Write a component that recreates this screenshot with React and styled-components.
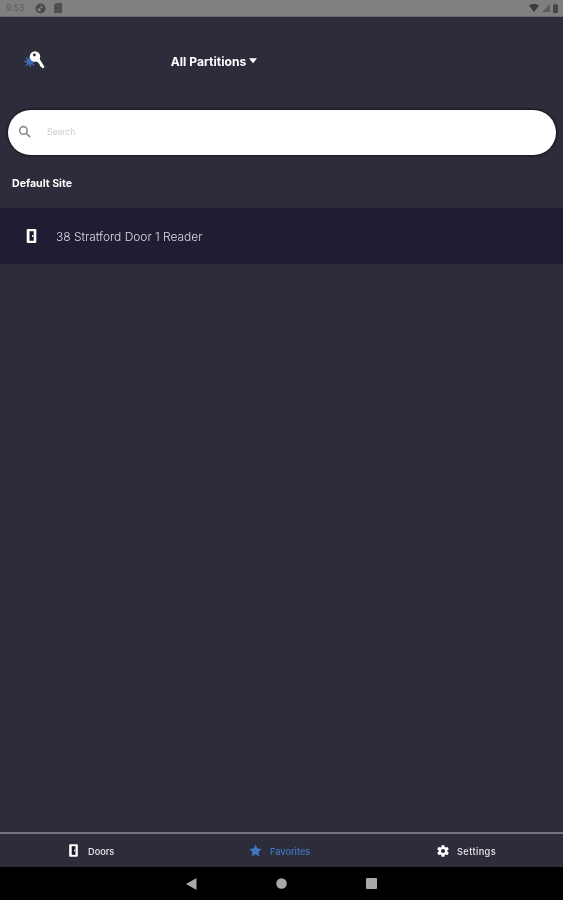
import React from "react";
import styled, { createGlobalStyle } from "styled-components";

const Global = createGlobalStyle`
  html, body { margin: 0; padding: 0; background: #2d2c3a; }
  * { box-sizing: border-box; }
`;
const Screen = styled.div`
  width: 563px; height: 900px; display: flex; flex-direction: column;
  background: #2d2c3a; font-family: Inter, "Liberation Sans", sans-serif; overflow: hidden;
`;
const StatusBar = styled.div`
  height: 17px; flex: none; background: #7f7f7f; display: flex; align-items: center;
  justify-content: space-between; padding: 0 5px 0 6px; border-bottom: 1px solid #6a6a6c;
`;
const StatusGroup = styled.div`display: flex; align-items: center; gap: ${p => p.$gap || 5}px;`;
const Clock = styled.span`font-size: 8.5px; color: #5b5b5d; margin-right: 3px; filter: blur(.4px);`;
const Header = styled.header`
  height: 93px; flex: none; position: relative; display: flex; justify-content: center; padding-top: 36px;
`;
const KeysLogo = styled.svg`position: absolute; left: 23px; top: 31px;`;
const PartitionButton = styled.div`
  display: flex; align-items: center; gap: 3px; height: 16px; margin-right: 135px; color: #fff;
  font-size: 12.1px; font-weight: 700; filter: blur(.4px);
`;
const SearchBar = styled.div`
  flex: none; height: 45px; margin: 0 7px 0 8px; border-radius: 23px; background: #fff;
  box-shadow: 0 0 2px 1px #16151f; display: flex; align-items: center; padding-left: 10px; gap: 16px;
`;
const SearchIcon = styled.svg`margin-top: -2px;`;
const SearchHint = styled.span`font-size: 8.5px; color: #c9c9c9; margin-top: -1px; filter: blur(.4px);`;
const SiteTitle = styled.div`
  flex: none; margin-top: 23px; padding-left: 12px; height: 12px; line-height: 12px;
  color: #fff; font-size: 10.6px; font-weight: 700; filter: blur(.4px);
`;
const DoorRow = styled.div`
  flex: none; margin-top: 18px; height: 56px; background: #1f1d33; display: flex; align-items: center;
  padding-left: 26px; gap: 19px;
`;
const DoorLabel = styled.span`color: #dcdce2; font-size: 12px; font-weight: 300; letter-spacing: -.03px; filter: blur(.4px);`;
const Spacer = styled.div`flex: 1;`;
const TabBar = styled.nav`
  flex: none; height: 35px; border-top: 2px solid #75757f; display: flex; background: #2d2c3a;
`;
const Tab = styled.div`
  width: ${p => p.$w}px; display: flex; align-items: center;
  padding-left: ${p => p.$pad}px; gap: ${p => p.$gap}px;
  color: ${p => p.$active ? "#3f77c4" : "#e8e8ee"}; font-size: 9.2px; font-weight: 500;
`;
const TabText = styled.span`margin-top: 1px; filter: blur(.4px); letter-spacing: ${p => p.$spacing || 0}px;`;
const NavBar = styled.div`
  flex: none; height: 33px; background: #000; display: flex; align-items: center; padding-left: 186px; gap: 79px;
`;

const DoorIcon = ({ size = 14, w = 10 }) => (
  <svg width={w} height={size} viewBox="0 0 10 14">
    <rect x="0.2" y="0" width="9.6" height="14" rx="1.2" fill="#fff" />
    <path d="M3 2.2h4.2v9.6H3z" fill="#1b1a28" />
    <rect x="5.6" y="6" width="1.2" height="2" fill="#fff" />
  </svg>
);

export default function App() {
  return (
    <Screen>
      <Global />
      <StatusBar>
        <StatusGroup $gap={8}>
          <Clock>9:53</Clock>
          <svg width="11" height="11" viewBox="0 0 11 11">
            <circle cx="5.5" cy="5.5" r="5" fill="#4b4b4d" />
            <path d="M5.5 3a2.5 2.5 0 0 1 2.4 2H5.5z" fill="#8a8a8a" />
            <path d="M2.5 5.5h3v3a3 3 0 0 1-3-3z" fill="#8a8a8a" />
          </svg>
          <svg width="8" height="10" viewBox="0 0 8 10">
            <path d="M2 0h6v10H0V2z" fill="#4f4f51" />
          </svg>
        </StatusGroup>
        <StatusGroup $gap={3}>
          <svg width="10" height="8" viewBox="0 0 10 8"><path d="M0 1.5C3-.5 7-.5 10 1.5L5 8z" fill="#3b3b3d" /></svg>
          <svg width="8" height="8" viewBox="0 0 8 8"><path d="M8 0v8H0z" fill="#5c5c5e" /></svg>
          <svg width="5" height="9" viewBox="0 0 5 9"><path d="M1.2 0h2.6v1H5v8H0V1h1.2z" fill="#474749" /></svg>
        </StatusGroup>
      </StatusBar>
      <Header>
        <KeysLogo width="24" height="24" viewBox="0 0 24 24">
          <circle cx="7" cy="13.5" r="3.2" fill="#3d6fb5" />
          <path d="M7 8v11M1.5 13.5h11M3 9.5l8 8M11 9.5l-8 8" stroke="#3d6fb5" strokeWidth="1.4" />
          <circle cx="12" cy="8.5" r="5.2" fill="#fff" />
          <circle cx="11.4" cy="7" r="1.4" fill="#2d2c3a" />
          <path d="M13 12.5l3-2.5 5.6 9-2 1.6-1.6-2-1-.2-.3-1.8z" fill="#fff" />
        </KeysLogo>
        <PartitionButton>
          All Partitions
          <svg width="8" height="6" viewBox="0 0 9 6"><path d="M0 0h9L4.5 5.5z" fill="#fff" /></svg>
        </PartitionButton>
      </Header>
      <SearchBar>
        <SearchIcon width="13" height="13" viewBox="0 0 24 24" fill="none" stroke="#8d8d8d" strokeWidth="3">
          <circle cx="10" cy="10" r="7" />
          <path d="M15 15l7.5 7.5" />
        </SearchIcon>
        <SearchHint>Search</SearchHint>
      </SearchBar>
      <SiteTitle>Default Site</SiteTitle>
      <DoorRow>
        <DoorIcon w={11} size={14} />
        <DoorLabel>38 Stratford Door 1 Reader</DoorLabel>
      </DoorRow>
      <Spacer />
      <TabBar>
        <Tab $w={188} $pad={69} $gap={10}>
          <DoorIcon w={9} size={13} />
          <TabText>Doors</TabText>
        </Tab>
        <Tab $w={187} $pad={61} $gap={8} $active>
          <svg width="13" height="13" viewBox="0 0 24 24"><path d="M12 1l3.4 7.3 7.9 1-5.8 5.5 1.5 8L12 18.8 5 22.8l1.5-8L.7 9.3l7.9-1z" fill="#3f77c4" /></svg>
          <TabText>Favorites</TabText>
        </Tab>
        <Tab $w={188} $pad={61} $gap={7}>
          <svg width="14" height="14" viewBox="0 0 24 24"><path fill="#fff" d="M19.4 13c.04-.3.1-.7.1-1s-.04-.7-.1-1l2.1-1.6c.2-.15.25-.42.13-.64l-2-3.46c-.12-.22-.4-.3-.6-.22l-2.5 1c-.52-.4-1.08-.73-1.7-.98l-.37-2.65A.5.5 0 0 0 14 2h-4a.5.5 0 0 0-.5.42l-.37 2.65c-.62.25-1.18.58-1.7.98l-2.5-1c-.23-.08-.48 0-.6.22l-2 3.46c-.13.22-.07.5.12.64L4.6 11c-.04.3-.1.7-.1 1s.04.7.1 1l-2.1 1.6c-.2.15-.25.42-.13.64l2 3.46c.12.22.4.3.6.22l2.5-1c.52.4 1.08.73 1.7.98l.37 2.65c.04.24.25.42.5.42h4c.25 0 .46-.18.5-.42l.37-2.65c.62-.25 1.18-.58 1.7-.98l2.5 1c.23.08.48 0 .6-.22l2-3.46c.12-.22.07-.5-.12-.64zM12 15.5a3.5 3.5 0 1 1 0-7 3.5 3.5 0 0 1 0 7z" /></svg>
          <TabText $spacing={0.4}>Settings</TabText>
        </Tab>
      </TabBar>
      <NavBar>
        <svg width="11" height="12" viewBox="0 0 11 12"><path d="M10.5 0v12L0 6z" fill="#a8a8a8" /></svg>
        <svg width="11" height="11" viewBox="0 0 11 11"><circle cx="5.5" cy="5.5" r="5.3" fill="#a8a8a8" /></svg>
        <svg width="11" height="11" viewBox="0 0 11 11"><rect width="11" height="11" rx="1" fill="#a8a8a8" /></svg>
      </NavBar>
    </Screen>
  );
}
